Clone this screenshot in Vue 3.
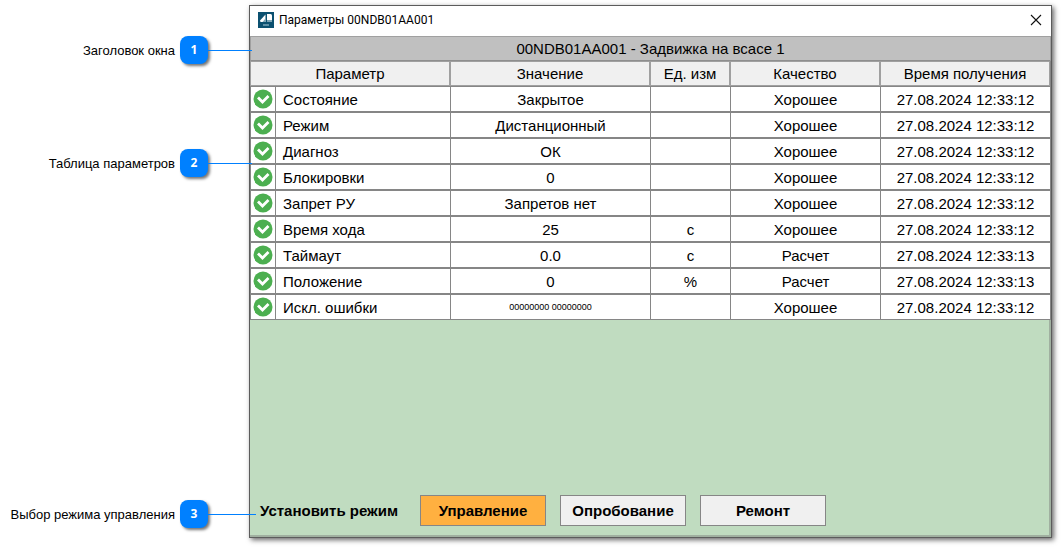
<script setup>
import { ref } from 'vue'

const callouts = [
  { n: 1, text: 'Заголовок окна', reach: 'short' },
  { n: 2, text: 'Таблица параметров', reach: 'short' },
  { n: 3, text: 'Выбор режима управления', reach: 'long' }
]

const rows = [
  { name: 'Состояние', value: 'Закрытое', unit: '', quality: 'Хорошее', time: '27.08.2024 12:33:12' },
  { name: 'Режим', value: 'Дистанционный', unit: '', quality: 'Хорошее', time: '27.08.2024 12:33:12' },
  { name: 'Диагноз', value: 'ОК', unit: '', quality: 'Хорошее', time: '27.08.2024 12:33:12' },
  { name: 'Блокировки', value: '0', unit: '', quality: 'Хорошее', time: '27.08.2024 12:33:12' },
  { name: 'Запрет РУ', value: 'Запретов нет', unit: '', quality: 'Хорошее', time: '27.08.2024 12:33:12' },
  { name: 'Время хода', value: '25', unit: 'с', quality: 'Хорошее', time: '27.08.2024 12:33:12' },
  { name: 'Таймаут', value: '0.0', unit: 'с', quality: 'Расчет', time: '27.08.2024 12:33:13' },
  { name: 'Положение', value: '0', unit: '%', quality: 'Расчет', time: '27.08.2024 12:33:13' },
  { name: 'Искл. ошибки', value: '00000000 00000000', unit: '', quality: 'Хорошее', time: '27.08.2024 12:33:12', small: true }
]

const modes = ['Управление', 'Опробование', 'Ремонт']
const mode = ref('Управление')
</script>

<template>
  <div class="page">
    <aside class="callouts">
      <div v-for="c in callouts" :key="c.n" class="callout" :class="c.reach">
        <span>{{ c.text }}</span>
        <b class="badge">{{ c.n }}</b>
      </div>
    </aside>

    <main class="window">
      <header class="titlebar">
        <svg class="logo" viewBox="0 0 16 16" aria-hidden="true">
          <rect width="16" height="16" fill="#0b5070" />
          <path d="M2 8.500L7.500 2.500V10H2.500z" fill="#fff" />
          <path d="M4.500 10L7.500 6.500V10z" fill="#7fa5b5" />
          <path d="M9 2h3.500q1.500 0 1.500 1.500V8H9z" fill="#fff" />
          <path d="M9 8h5v2H9z" fill="#7fa5b5" />
          <path d="M5 12h6v2H5z" fill="#5e90a6" />
        </svg>
        <span class="title">Параметры 00NDB01AA001</span>
        <button class="close" type="button" aria-label="Закрыть">
          <svg viewBox="0 0 12 12" aria-hidden="true">
            <path d="M1 1l10 10M11 1L1 11" fill="none" stroke="#111" stroke-width="1.100" />
          </svg>
        </button>
      </header>

      <section class="content">
        <h1 class="caption">00NDB01AA001 - Задвижка на всасе 1</h1>
        <table>
          <colgroup>
            <col class="c-icon" /><col class="c-name" /><col class="c-value" />
            <col class="c-unit" /><col class="c-quality" /><col class="c-time" />
          </colgroup>
          <thead>
            <tr>
              <th colspan="2">Параметр</th>
              <th>Значение</th>
              <th>Ед. изм</th>
              <th>Качество</th>
              <th>Время получения</th>
            </tr>
          </thead>
          <tbody>
            <tr v-for="r in rows" :key="r.name">
              <td class="status">
                <svg viewBox="0 0 20 20" role="img" aria-label="Норма">
                  <circle cx="10" cy="10" r="9.500" fill="#4caf50" />
                  <path d="M5 8.500l4.500 4.500 6-6" fill="none" stroke="#fff" stroke-width="2.800" />
                </svg>
              </td>
              <td class="name">{{ r.name }}</td>
              <td :class="{ small: r.small }">{{ r.value }}</td>
              <td>{{ r.unit }}</td>
              <td>{{ r.quality }}</td>
              <td>{{ r.time }}</td>
            </tr>
          </tbody>
        </table>

        <footer class="modes">
          <span class="modes-label">Установить режим</span>
          <button
            v-for="m in modes"
            :key="m"
            type="button"
            class="mode"
            :class="{ active: m === mode }"
            @click="mode = m"
          >{{ m }}</button>
        </footer>
      </section>
    </main>
  </div>
</template>

<style>
body {
  background: #fff;
}
</style>

<style scoped>
.page {
  display: flex;
  box-sizing: border-box;
  min-height: 100vh;
  padding: 5px 11px 9px 0;
  font-family: "Liberation Sans", Arial, sans-serif;
  font-size: 15px;
  color: #000;
}

.callouts {
  position: relative;
  z-index: 1;
  display: flex;
  flex-direction: column;
  flex: none;
  gap: 85px;
  box-sizing: border-box;
  width: 208px;
  margin-right: 41px;
  padding: 31px 0 10px;
}

.callout {
  position: relative;
  display: flex;
  align-items: center;
  justify-content: flex-end;
  gap: 5px;
  height: 28px;
  font-size: 13px;
  white-space: nowrap;
}

.callout:last-child {
  margin-top: auto;
}

.callout::after {
  content: "";
  position: absolute;
  top: 14px;
  left: 100%;
  width: 44px;
  height: 1px;
  background: #0080ff;
}

.callout.long::after {
  width: 48px;
}

.badge {
  width: 28px;
  border-radius: 8px;
  background: #0080ff;
  box-shadow: 2px 2px 3px rgba(0, 0, 0, 0.55);
  color: #fff;
  font-family: "Open Sans", sans-serif;
  font-size: 12px;
  line-height: 28px;
  text-align: center;
}

.window {
  display: flex;
  flex: 1;
  flex-direction: column;
  min-width: 0;
  border: 1px solid #5c5c5c;
  background: #fff;
  box-shadow: 2px 2px 5px rgba(0, 0, 0, 0.6);
}

.titlebar {
  display: flex;
  align-items: center;
  height: 30px;
  padding: 0 9px 2px 8px;
  box-sizing: border-box;
}

.logo {
  width: 16px;
  height: 16px;
  margin-right: 5px;
}

.title {
  flex: 1;
  font-family: Roboto, "Open Sans", sans-serif;
  font-size: 12px;
}

.close {
  display: flex;
  padding: 0;
  border: 0;
  background: none;
}

.close svg {
  width: 12px;
  height: 12px;
}

.content {
  display: flex;
  flex: 1;
  flex-direction: column;
  background: #c0dcc0;
  box-shadow: inset -2px -2px 0 #a0b0a0;
}

.caption {
  margin: 0;
  border: 1px solid #a0a0a0;
  border-bottom-color: #8e8e8e;
  background: #c0c0c0;
  font-size: 15px;
  font-weight: 400;
  line-height: 23px;
  text-align: center;
}

table {
  width: 100%;
  table-layout: fixed;
  border-collapse: separate;
  border-spacing: 0;
  border-right: 1px solid #868686;
}

.c-icon { width: 25px; }
.c-name { width: 175px; }
.c-value { width: 200px; }
.c-unit { width: 80px; }
.c-quality { width: 150px; }
.c-time { width: 170px; }

th,
td {
  padding: 0;
  font-weight: 400;
  text-align: center;
  white-space: nowrap;
}

th {
  height: 23px;
  border: 1px solid #a0a0a0;
  background: #f0f0f0;
}

td {
  height: 24px;
  border: solid #868686;
  border-width: 1px 0 1px 1px;
  background: #fff;
}

.status svg {
  display: block;
  width: 20px;
  height: 20px;
  margin: 0 auto;
}

.name {
  padding-left: 7px;
  text-align: left;
}

.small {
  font-size: 9px;
}

.modes {
  display: flex;
  align-items: center;
  gap: 14px;
  margin-top: auto;
  padding: 0 10px 11px;
  font-weight: 700;
}

.modes-label {
  width: 146px;
  white-space: nowrap;
}

.mode {
  box-sizing: border-box;
  width: 126px;
  height: 31px;
  padding: 0;
  border: 1px solid #868686;
  background: #f0f0f0;
  color: #000;
  font: inherit;
}

.mode.active {
  background: #ffb040;
}
</style>
